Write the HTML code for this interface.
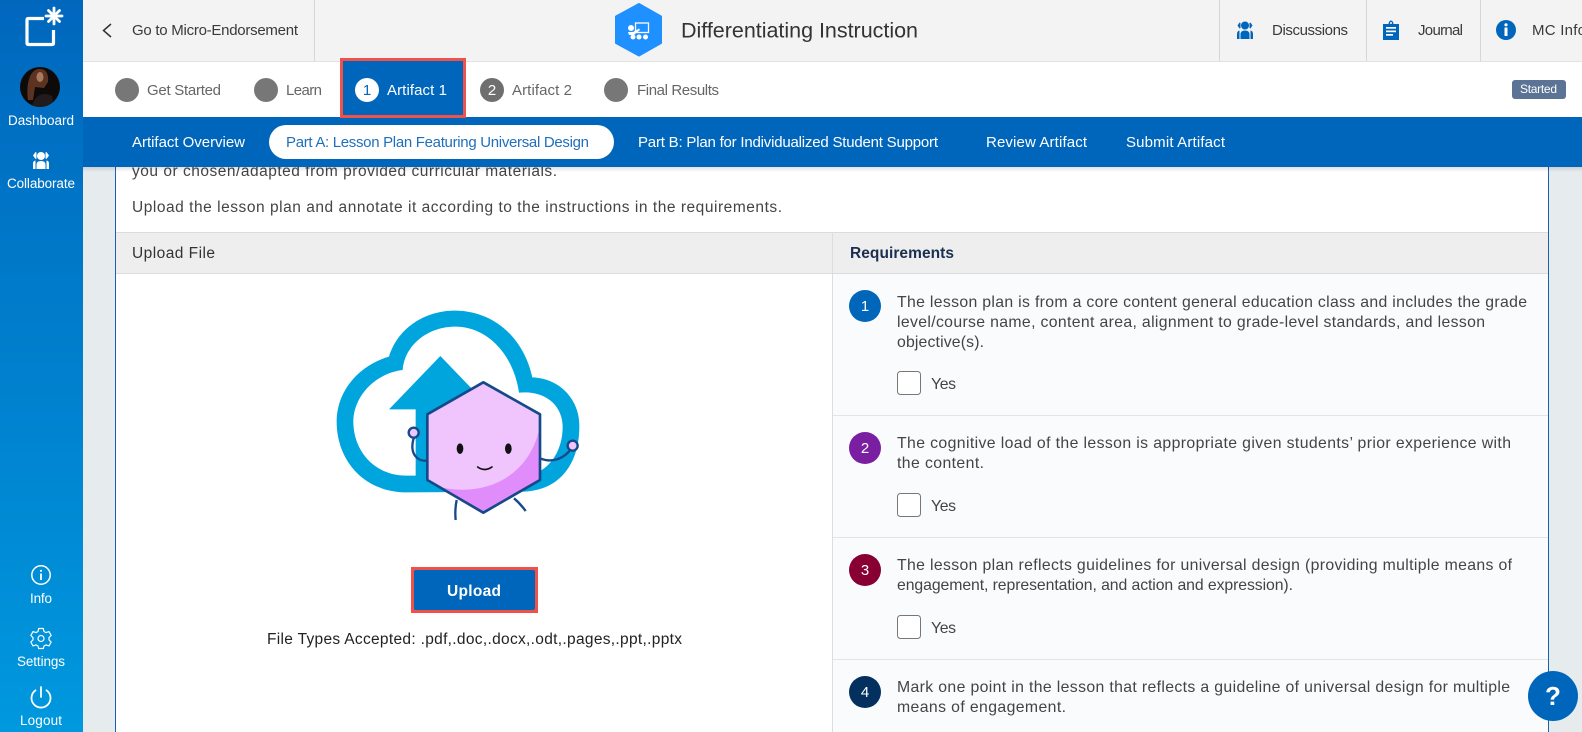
<!DOCTYPE html>
<html lang="en"><head><meta charset="utf-8"><title>Differentiating Instruction</title>
<style>
html,body{margin:0;padding:0;width:1582px;height:732px;overflow:hidden;background:#e6ebee}
svg{display:block;position:absolute;left:0;top:0}
text{font-family:"Liberation Sans",sans-serif;font-size:15.500px;fill:#444}
.h{fill:#3a3a3a;font-size:15px}
.s{fill:#666;font-size:15px}
.w{fill:#fff;font-size:15px}
.side{fill:#fff;font-size:13.500px}
.b{fill:#444;font-size:15.800px}
.n{fill:#fff;font-size:15px;text-anchor:middle}
</style></head><body>
<svg width="1582" height="732" viewBox="0 0 1582 732" xmlns="http://www.w3.org/2000/svg">
<defs>
<linearGradient id="sb" x1="0" y1="0" x2="0" y2="1"><stop offset="0" stop-color="#0067bd"/><stop offset="1" stop-color="#0098de"/></linearGradient>
<linearGradient id="shadow" x1="0" y1="0" x2="0" y2="1"><stop offset="0" stop-color="#000" stop-opacity=".12"/><stop offset="1" stop-color="#000" stop-opacity="0"/></linearGradient>
<clipPath id="av"><circle cx="40" cy="87" r="20"/></clipPath>
</defs>
<rect width="1582" height="732" fill="#e6ebee"/>

<!-- card -->
<rect x="115.500" y="120" width="1433" height="640" fill="#fff" stroke="#1b62ad"/>
<text x="132" y="176" textLength="425">you or chosen/adapted from provided curricular materials.</text>
<text x="132" y="212" textLength="650">Upload the lesson plan and annotate it according to the instructions in the requirements.</text>

<!-- table head -->
<rect x="116" y="232" width="1432" height="41" fill="#eeeeee"/>
<rect x="116" y="232" width="1432" height="1" fill="#dcdcdc"/>
<rect x="116" y="273" width="1432" height="1" fill="#dcdcdc"/>
<text x="132" y="258" textLength="83" style="fill:#333;font-size:15.500px">Upload File</text>
<text x="850" y="258" textLength="104" style="fill:#1a2f50;font-weight:bold;font-size:15.500px">Requirements</text>

<!-- right pane -->
<rect x="833" y="274" width="715" height="458" fill="#f9fbfd"/>
<rect x="832" y="232" width="1" height="500" fill="#dddddd"/>
<rect x="833" y="415" width="715" height="1" fill="#e2e4e7"/>
<rect x="833" y="537" width="715" height="1" fill="#e2e4e7"/>
<rect x="833" y="659" width="715" height="1" fill="#e2e4e7"/>

<circle cx="865" cy="306" r="16" fill="#0066b9"/><text class="n" x="865" y="311">1</text>
<text class="b" x="897" y="307" textLength="630">The lesson plan is from a core content general education class and includes the grade</text>
<text class="b" x="897" y="327" textLength="588">level/course name, content area, alignment to grade-level standards, and lesson</text>
<text class="b" x="897" y="347" textLength="87">objective(s).</text>
<rect x="897.500" y="371.500" width="23" height="23" rx="3" fill="#fff" stroke="#777"/>
<text class="b" x="931" y="389" textLength="25">Yes</text>

<circle cx="865" cy="448" r="16" fill="#7b1fa2"/><text class="n" x="865" y="453">2</text>
<text class="b" x="897" y="448" textLength="614">The cognitive load of the lesson is appropriate given students’ prior experience with</text>
<text class="b" x="897" y="468" textLength="87">the content.</text>
<rect x="897.500" y="493.500" width="23" height="23" rx="3" fill="#fff" stroke="#777"/>
<text class="b" x="931" y="511" textLength="25">Yes</text>

<circle cx="865" cy="570" r="16" fill="#880033"/><text class="n" x="865" y="575">3</text>
<text class="b" x="897" y="570" textLength="615">The lesson plan reflects guidelines for universal design (providing multiple means of</text>
<text class="b" x="897" y="590" textLength="396">engagement, representation, and action and expression).</text>
<rect x="897.500" y="615.500" width="23" height="23" rx="3" fill="#fff" stroke="#777"/>
<text class="b" x="931" y="633" textLength="25">Yes</text>

<circle cx="865" cy="692" r="16" fill="#04305f"/><text class="n" x="865" y="697">4</text>
<text class="b" x="897" y="692" textLength="613">Mark one point in the lesson that reflects a guideline of universal design for multiple</text>
<text class="b" x="897" y="712" textLength="169">means of engagement.</text>

<!-- illustration -->
<g transform="translate(320,290) scale(.33333)">
<path fill="#00a5dd" fill-rule="evenodd" d="M207,200C235,110 320,60 410,62C520,65 610,140 637,262C720,265 780,330 778,410C778,520 720,602 610,605L260,607C130,607 50,510 50,395C50,300 120,225 207,200ZM248,240C165,250 100,320 100,395C100,480 160,557 260,557L610,557C680,555 728,490 728,410C728,350 680,300 597,308C580,190 500,112 410,110C330,108 255,160 248,240Z"/>
<path fill="#00a5dd" d="M361,198L515,358H440V560H287V358H207Z"/>
<g fill="none" stroke="#16498a" stroke-width="7" stroke-linecap="round">
<path d="M322,512C290,515 268,490 281,445"/>
<path d="M660,505C700,522 735,502 752,478"/>
<path d="M410,630Q404,660 407,690" stroke-linecap="butt"/>
<path d="M582,625Q600,640 617,663" stroke-linecap="butt"/>
</g>
<circle cx="281" cy="428" r="15" fill="#f0c4fd" stroke="#16498a" stroke-width="7"/>
<circle cx="758" cy="467" r="15" fill="#f0c4fd" stroke="#16498a" stroke-width="7"/>
<path d="M490,277L660,373V570L490,668L322,570V373Z" fill="#f0c4fd"/>
<path d="M660,405C640,530 530,625 365,593L490,668L660,570Z" fill="#e08cfb"/>
<path d="M490,277L660,373V570L490,668L322,570V373Z" fill="none" stroke="#16498a" stroke-width="8" stroke-linejoin="round"/>
<ellipse cx="420" cy="476" rx="10" ry="16" fill="#111"/>
<ellipse cx="565" cy="476" rx="10" ry="16" fill="#111"/>
<path d="M473,531Q494,546 516,531" fill="none" stroke="#111" stroke-width="5" stroke-linecap="round"/>
</g>

<!-- upload -->
<rect x="411" y="567" width="127" height="46" fill="#f0524a"/>
<rect x="414" y="570" width="121" height="40" rx="2" fill="#0066bb"/>
<text x="447" y="596" textLength="54" style="fill:#fff;font-weight:bold;font-size:15.500px">Upload</text>
<text x="267" y="644" textLength="415" style="fill:#222;font-size:15.500px">File Types Accepted: .pdf,.doc,.docx,.odt,.pages,.ppt,.pptx</text>

<!-- step bar -->
<rect x="83" y="61" width="1499" height="56" fill="#fff"/>
<circle cx="127" cy="90" r="12" fill="#777"/><text class="s" x="147" y="95" textLength="74">Get Started</text>
<circle cx="266" cy="90" r="12" fill="#777"/><text class="s" x="286" y="95" textLength="36">Learn</text>
<circle cx="492" cy="90" r="12" fill="#6f6f6f"/><text x="492" y="95" style="fill:#fff;font-size:15px;text-anchor:middle">2</text>
<text class="s" x="512" y="95" textLength="60">Artifact 2</text>
<circle cx="616" cy="90" r="12" fill="#777"/><text class="s" x="637" y="95" textLength="82">Final Results</text>
<rect x="1512" y="80" width="54" height="19" rx="3" fill="#5b7395"/>
<text x="1520" y="93" textLength="37" style="fill:#fff;font-size:12px">Started</text>

<!-- sub nav -->
<rect x="83" y="167" width="1499" height="5" fill="url(#shadow)"/>
<rect x="83" y="117" width="1499" height="50" fill="#0066bb"/>
<text class="w" x="132" y="147" textLength="113">Artifact Overview</text>
<rect x="269" y="125" width="345" height="34" rx="17" fill="#fff"/>
<text x="286" y="147" textLength="303" style="fill:#1f6fbd;font-size:15px">Part A: Lesson Plan Featuring Universal Design</text>
<text class="w" x="638" y="147" textLength="300">Part B: Plan for Individualized Student Support</text>
<text class="w" x="986" y="147" textLength="101">Review Artifact</text>
<text class="w" x="1126" y="147" textLength="99">Submit Artifact</text>

<!-- header -->
<rect x="83" y="0" width="1499" height="61" fill="#f3f3f3"/>
<rect x="83" y="61" width="1499" height="1" fill="#e2e2e2"/>
<rect x="314" y="0" width="1" height="61" fill="#d6d6d6"/>
<rect x="1219" y="0" width="1" height="61" fill="#d6d6d6"/>
<rect x="1366" y="0" width="1" height="61" fill="#d6d6d6"/>
<rect x="1480" y="0" width="1" height="61" fill="#d6d6d6"/>
<path d="M111,24L103.500,30.500L111,37" fill="none" stroke="#333" stroke-width="1.500"/>
<text class="h" x="132" y="35" textLength="166">Go to Micro-Endorsement</text>

<path d="M639,4L661,16.500V43L639,55.500L616,43V16.500Z" fill="#1e90ff" stroke="#1e90ff" stroke-width="2" stroke-linejoin="round"/>
<g fill="#fff">
<rect x="635.500" y="23" width="13" height="9.500" fill="none" stroke="#fff" stroke-width="1.300"/>
<circle cx="631" cy="28" r="3"/>
<path d="M628,32H633L639,28.500L640,30L634,35H629Z"/>
<circle cx="633" cy="37" r="2.500"/><circle cx="639" cy="37" r="2.500"/><circle cx="645.500" cy="37" r="2.500"/>
</g>
<text x="681" y="37.500" textLength="237" style="fill:#333;font-size:21.500px">Differentiating Instruction</text>

<!-- discussions icon -->
<g fill="#0066bb">
<circle cx="1245" cy="25.500" r="4"/>
<path d="M1239.500,22.500L1237.500,25.500L1239.500,28.500L1240.500,28V23Z"/>
<path d="M1250.500,22.500L1252.500,25.500L1250.500,28.500L1249.500,28V23Z"/>
<path d="M1240.500,39H1249.500V34.500Q1249.500,30.500 1245,30.500Q1240.500,30.500 1240.500,34.500Z"/>
<path d="M1239.500,39H1237V34Q1237,31 1239.500,30.500Z"/>
<path d="M1250.500,39H1253V34Q1253,31 1250.500,30.500Z"/>
</g>
<text class="h" x="1272" y="35" textLength="76">Discussions</text>

<!-- journal icon -->
<path fill="#0066bb" d="M1383,24H1388.500Q1389,20.500 1391,20.500Q1393,20.500 1393.500,24H1399V40H1383Z"/>
<g fill="#fff"><rect x="1386" y="27" width="10" height="1.700"/><rect x="1386" y="30.500" width="10" height="1.700"/><rect x="1386" y="34" width="7" height="1.700"/><circle cx="1391" cy="23" r="1"/></g>
<text class="h" x="1418" y="35" textLength="45">Journal</text>

<!-- info icon -->
<circle cx="1506" cy="30" r="10" fill="#0066bb"/>
<circle cx="1506" cy="24.800" r="1.600" fill="#fff"/>
<rect x="1504.500" y="27.500" width="3" height="8.500" fill="#fff"/>
<text class="h" x="1532" y="35" textLength="54">MC Info</text>

<!-- active step tab, above header and nav -->
<rect x="340" y="58" width="126" height="60" fill="#f0524a"/>
<rect x="343" y="61" width="120" height="54" fill="#0066bb"/>
<circle cx="367" cy="90" r="12" fill="#fff"/><text x="367" y="95" style="fill:#0066bb;font-size:15px;text-anchor:middle">1</text>
<text class="w" x="387" y="95" textLength="60">Artifact 1</text>

<!-- sidebar -->
<rect x="0" y="0" width="83" height="732" fill="url(#sb)"/>
<path d="M44,18.500H28.500Q27,18.500 27,20V43Q27,44.500 28.500,44.500H52Q53.500,44.500 53.500,43V30" fill="none" stroke="#fff" stroke-width="3.200"/>
<g stroke="#fff" stroke-width="2.800" stroke-linecap="round">
<path d="M54,8V24"/><path d="M46,16H62"/><path d="M48.500,10.500L59.500,21.500"/><path d="M59.500,10.500L48.500,21.500"/>
</g>
<circle cx="40" cy="87" r="20" fill="#0e0a0a"/>
<g clip-path="url(#av)">
<path d="M28,100C26,85 29,71 38,69C46,68 49,74 48,82L44,88L35,87L33,100Z" fill="#5c3321"/>
<ellipse cx="40" cy="77" rx="3.500" ry="5" fill="#a87a62"/>
<path d="M32,107C34,96 42,91 52,96L54,107Z" fill="#231a1c"/>
</g>
<text class="side" x="8" y="125" textLength="66">Dashboard</text>
<g fill="#fff">
<circle cx="41" cy="156" r="4"/>
<path d="M35.500,152L33,155.500L35.500,159L36.500,158.500V152.500Z"/>
<path d="M46.500,152L49,155.500L46.500,159L45.500,158.500V152.500Z"/>
<path d="M36.500,169H45.500V164.500Q45.500,161 41,161Q36.500,161 36.500,164.500Z"/>
<path d="M35.500,169H33V163.500Q33,161 35.500,160.500Z"/>
<path d="M46.500,169H49V163.500Q49,161 46.500,160.500Z"/>
</g>
<text class="side" x="7" y="188" textLength="68">Collaborate</text>

<circle cx="41" cy="575" r="9.200" fill="none" stroke="#fff" stroke-width="1.500"/>
<circle cx="41" cy="570.800" r="1.100" fill="#fff"/><rect x="40.100" y="573.500" width="1.800" height="6.500" fill="#fff"/>
<text class="side" x="30" y="603" textLength="22">Info</text>

<g fill="none" stroke="#fff" stroke-width="1.200" stroke-linejoin="round">
<path d="M38.700,628.500H43.300L44,631.500L46,632.600L49,631.600L51.200,635.500L49,637.600V639.900L51.200,642L49,645.900L46,644.900L44,646L43.300,648.500H38.700L38,646L36,644.900L33,645.900L30.800,642L33,639.900V637.600L30.800,635.500L33,631.600L36,632.600L38,631.500Z"/>
<circle cx="41" cy="638.500" r="3"/>
</g>
<text class="side" x="17" y="666" textLength="48">Settings</text>

<path d="M35.500,690.300A9.500,9.500 0 1 0 46.500,690.300" fill="none" stroke="#fff" stroke-width="1.800" stroke-linecap="round"/>
<path d="M41,687V697" stroke="#fff" stroke-width="1.800" stroke-linecap="round"/>
<text class="side" x="20" y="725" textLength="42">Logout</text>

<!-- help -->
<circle cx="1553" cy="696" r="25" fill="#0066bb"/>
<text x="1553" y="705" style="fill:#fff;font-size:26px;font-weight:bold;text-anchor:middle">?</text>
</svg>
</body></html>
